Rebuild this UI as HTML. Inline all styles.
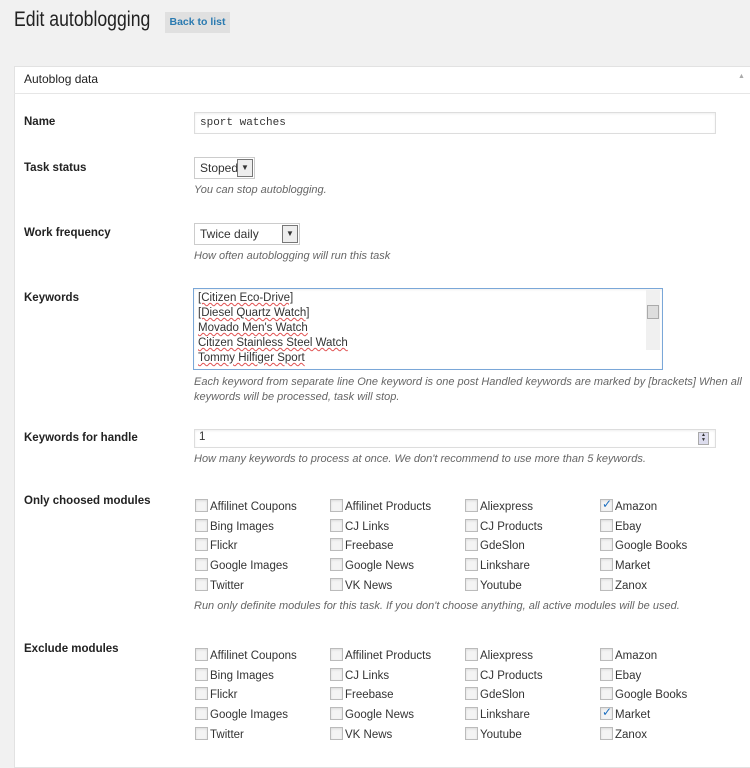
<!DOCTYPE html>
<html><head><meta charset="utf-8"><style>
body{margin:0;width:750px;height:743px;overflow:hidden;background:#f1f1f1;font-family:"Liberation Sans",sans-serif;color:#333;font-size:12px;position:relative}
.a{position:absolute;white-space:nowrap}
h1{position:absolute;left:14px;top:8px;margin:0;font-weight:normal;font-size:21px;color:#222;transform:scaleX(0.84);transform-origin:0 0;white-space:nowrap}
.btn{position:absolute;left:165px;top:12px;width:65px;height:21px;background:#e0e0e0;color:#2a7ab0;font-size:10.5px;font-weight:bold;line-height:21px;text-align:center}
.panel{position:absolute;left:14px;top:66px;width:750px;height:700px;background:#fff;border:1px solid #e2e2e2}
.hd{position:absolute;left:14px;top:66px;width:750px;height:27px;border-bottom:1px solid #e6e6e6}
.lbl{font-weight:bold;font-size:11.5px;color:#222}
.desc{font-style:italic;color:#666;font-size:11px}
.box{position:absolute;border:1px solid #ddd;background:#fff;box-shadow:inset 0 1px 2px rgba(0,0,0,.07)}
.sel{position:absolute;border:1px solid #ccc;background:#fff;font-size:12px;line-height:20px;padding-left:5px;box-sizing:border-box}
.sel i{position:absolute;right:1px;top:1px;width:14px;height:16px;border:1px solid #777;background:#eee;font-style:normal;font-size:8px;line-height:16px;text-align:center}
.cb{position:absolute;width:11px;height:11px;border:1px solid #bbb;background:#f4f4f4;box-shadow:inset 0 1px 2px rgba(0,0,0,.1)}
.ck{position:absolute;font-size:11.5px;color:#333;line-height:14px}
.ta div{line-height:15px;text-decoration:underline wavy #e05050;text-decoration-thickness:1px}
</style></head><body>
<h1>Edit autoblogging</h1>
<div class="btn">Back to list</div>
<div class="panel"></div>
<div class="hd"></div>
<div class="a lbl" style="left:24px;top:72px;font-weight:normal;font-size:12px">Autoblog data</div>
<div class="a" style="left:738px;top:73px;font-size:7px;color:#aaa">▲</div>

<div class="a lbl" style="left:24px;top:116px">Name</div>
<div class="box" style="left:194px;top:112px;width:520px;height:20px"></div>
<div class="a" style="left:200px;top:117px;font-family:'Liberation Mono',monospace;font-size:11px">sport watches</div>

<div class="a lbl" style="left:24px;top:162px">Task status</div>
<div class="sel" style="left:194px;top:157px;width:61px;height:22px">Stoped<i>▼</i></div>
<div class="a desc" style="left:194px;top:184px">You can stop autoblogging.</div>

<div class="a lbl" style="left:24px;top:227px">Work frequency</div>
<div class="sel" style="left:194px;top:223px;width:106px;height:22px">Twice daily<i>▼</i></div>
<div class="a desc" style="left:194px;top:250px">How often autoblogging will run this task</div>

<div class="a lbl" style="left:24px;top:292px">Keywords</div>
<div class="box" style="left:193px;top:288px;width:468px;height:80px;border-color:#7aa7d8"></div>
<div class="a ta" style="left:198px;top:291px;font-size:11.5px">
<div>[Citizen Eco-Drive]</div><div>[Diesel Quartz Watch]</div><div>Movado Men's Watch</div><div>Citizen Stainless Steel Watch</div><div>Tommy Hilfiger Sport</div></div>
<div class="a" style="left:646px;top:290px;width:14px;height:60px;background:#f0f0f0"></div>
<div class="a" style="left:647px;top:305px;width:12px;height:14px;background:#ddd;border:1px solid #aaa;box-sizing:border-box"></div>
<div class="a desc" style="left:194px;top:375px;line-height:15px;white-space:normal;width:560px">Each keyword from separate line One keyword is one post Handled keywords are marked by [brackets] When all keywords will be processed, task will stop.</div>

<div class="a lbl" style="left:24px;top:432px">Keywords for handle</div>
<div class="box" style="left:194px;top:429px;width:520px;height:17px"></div>
<div class="a" style="left:199px;top:431px;font-size:11.5px">1</div>
<div class="a" style="left:698px;top:432px;width:9px;height:11px;border:1px solid #aaa;background:#dde;font-size:5px;line-height:5px;text-align:center">▲<br>▼</div>
<div class="a desc" style="left:194px;top:453px">How many keywords to process at once. We don't recommend to use more than 5 keywords.</div>

<div class="a lbl" style="left:24px;top:495px">Only choosed modules</div>
<div id="g1"></div>
<div class="a desc" style="left:194px;top:600px">Run only definite modules for this task. If you don't choose anything, all active modules will be used.</div>

<div class="a lbl" style="left:24px;top:643px">Exclude modules</div>
<div id="g2"></div>
<script>
var m=[["Affilinet Coupons","Affilinet Products","Aliexpress","Amazon"],["Bing Images","CJ Links","CJ Products","Ebay"],["Flickr","Freebase","GdeSlon","Google Books"],["Google Images","Google News","Linkshare","Market"],["Twitter","VK News","Youtube","Zanox"]];
var xs=[195,330,465,600];
function g(id,y0,chk){var h="";for(var r=0;r<5;r++)for(var c=0;c<4;c++){var y=Math.round(y0+r*19.7),x=xs[c];h+='<div class="cb" style="left:'+x+'px;top:'+(y-8)+'px"></div>';if(m[r][c]==chk)h+='<div class="a" style="left:'+(x+2)+'px;top:'+(y-10)+'px;color:#1e6fbf;font-size:12px">✓</div>';h+='<div class="ck" style="left:'+(x+15)+'px;top:'+(y-7)+'px">'+m[r][c]+'</div>';}document.getElementById(id).outerHTML=h;}
g("g1",507,"Amazon");g("g2",656,"Market");
</script>
</body></html>
